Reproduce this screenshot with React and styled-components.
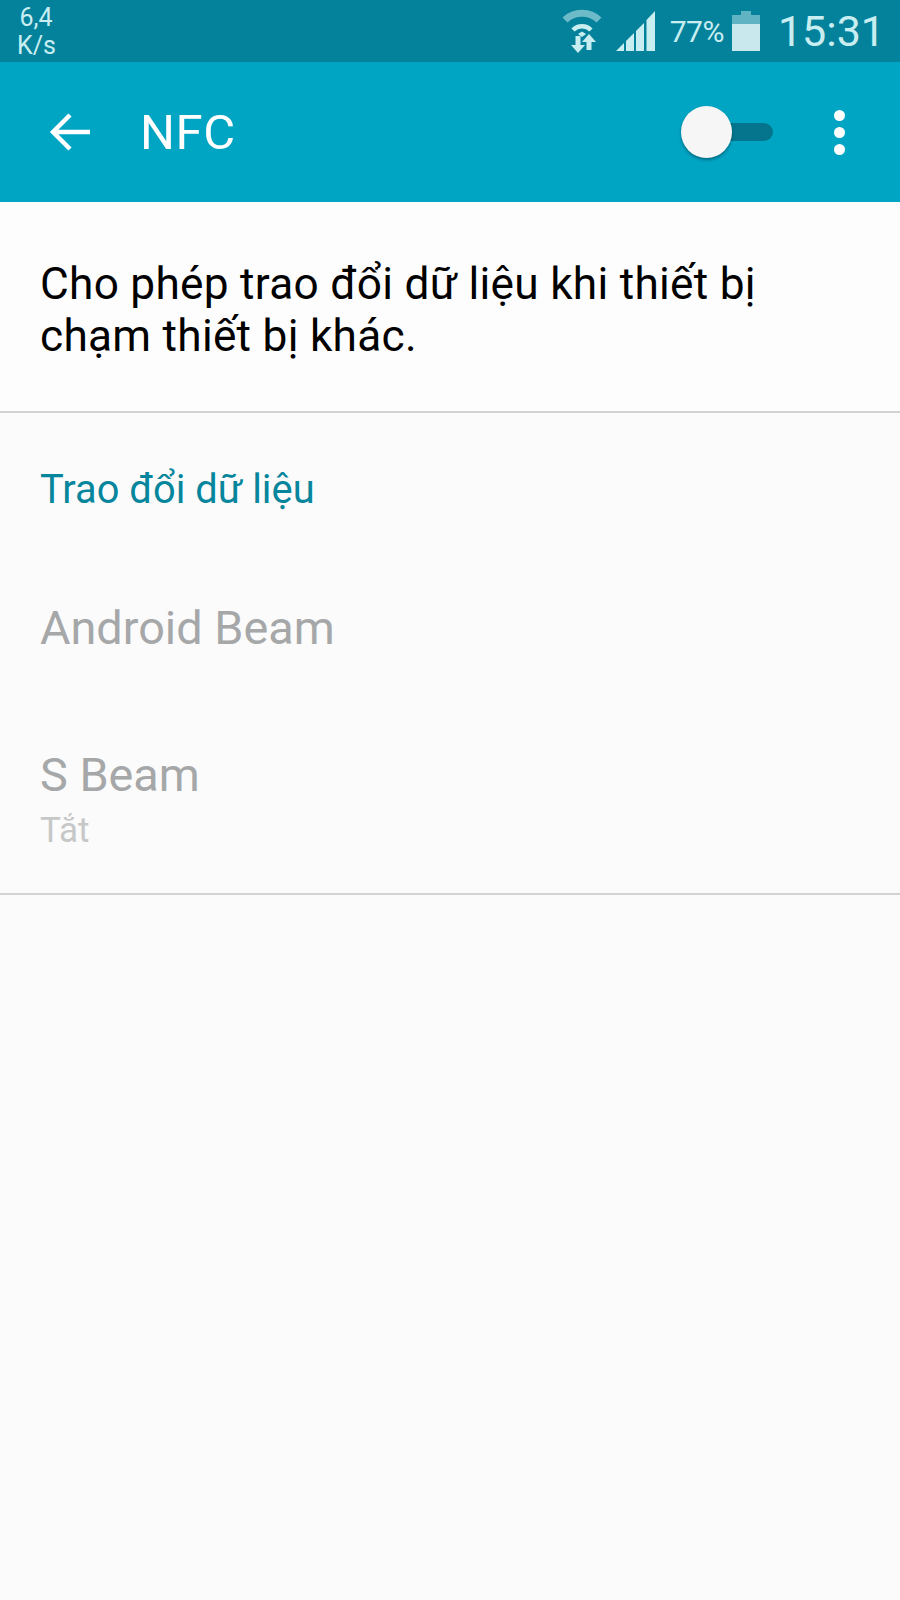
import React from 'react';
import styled, { createGlobalStyle } from 'styled-components';

const GlobalStyle = createGlobalStyle`
  html, body {
    margin: 0;
    padding: 0;
    background: #fbfbfb;
  }
  body {
    font-family: Roboto, "Liberation Sans", sans-serif;
  }
`;

const Screen = styled.div`
  width: 900px;
  height: 1600px;
  overflow: hidden;
  background: #fbfbfb;
`;

const StatusBar = styled.div`
  height: 62px;
  box-sizing: border-box;
  background: #05829b;
  color: #c9eef2;
  display: flex;
  align-items: center;
  justify-content: space-between;
  padding: 0 15px 0 17px;
`;

const Speed = styled.div`
  width: 38px;
  font-size: 25px;
  line-height: 28px;
  text-align: center;
  margin-top: 2px;
`;

const StatusRight = styled.div`
  display: flex;
  align-items: center;
`;

const SignalWrap = styled.div`
  display: flex;
  margin-left: 13px;
`;

const Percent = styled.span`
  font-size: 30px;
  letter-spacing: -0.5px;
  margin: 0 8px 0 14px;
`;

const Clock = styled.span`
  font-size: 43px;
  margin-left: 18px;
`;

const Toolbar = styled.div`
  height: 140px;
  box-sizing: border-box;
  background: #00a5c4;
  display: flex;
  align-items: center;
  padding: 0 0 0 47px;
  color: #fff;
`;

const Title = styled.div`
  font-size: 49px;
  letter-spacing: 0.6px;
  margin-left: 49px;
  flex: 1;
`;

const Switch = styled.div`
  width: 92px;
  height: 52px;
  display: flex;
  align-items: center;
`;

const Track = styled.div`
  width: 68px;
  height: 18px;
  margin-left: 24px;
  border-radius: 9px;
  background: #04758c;
  position: relative;
`;

const Thumb = styled.div`
  position: absolute;
  left: -24px;
  top: -17px;
  width: 51px;
  height: 52px;
  border-radius: 50%;
  background: #f6f6f6;
  box-shadow: 0 2px 3px rgba(0, 60, 80, 0.55);
`;

const MoreButton = styled.div`
  display: flex;
  flex-direction: column;
  gap: 6px;
  margin: 0 55px 0 61px;
`;

const Dot = styled.div`
  width: 11px;
  height: 11px;
  border-radius: 50%;
  background: #fff;
`;

const Description = styled.div`
  height: 209px;
  box-sizing: border-box;
  padding: 56px 120px 0 40px;
  font-size: 44.2px;
  letter-spacing: 0.27px;
  line-height: 52px;
  color: #000;
  background: #fdfdfd;
`;

const Section = styled.div`
  border-top: 2px solid #d2d2d2;
  border-bottom: 2px solid #d2d2d2;
  height: 484px;
  box-sizing: border-box;
  padding: 0 40px;
`;

const SectionHeader = styled.div`
  color: #06869c;
  font-size: 39.8px;
  line-height: 44px;
  padding-top: 55px;
`;

const ItemTitle = styled.div`
  color: #a5a7a8;
  font-size: 46.800px;
  line-height: 56px;
  margin-top: ${p => p.$gap}px;
`;

const ItemSub = styled.div`
  color: #c6c7c7;
  font-size: 35px;
  line-height: 40px;
  margin-top: 8px;
`;

const WifiIcon = () => (
  <svg width="42" height="46" viewBox="0 0 42 46">
    <path d="M4 12 C13 3 29 3 38 12" fill="none" stroke="#6dbac8" strokeWidth="7" />
    <path d="M12 22 C17 17 25 17 30 22" fill="none" stroke="#c9eef2" strokeWidth="4.500" />
    <path d="M17 26 L21 23.500 L25 26 L21 29 Z" fill="#c9eef2" />
    <path d="M14.500 28 H19.500 V37 H24 L17 45 L10 37 H14.500 Z" fill="#c9eef2" />
    <path d="M25.500 42 H30.500 V34 H35 L28 26 L21 34 H25.500 Z" fill="#c9eef2" />
  </svg>
);

const SignalIcon = () => (
  <svg width="40" height="40" viewBox="0 0 40 40">
    <path d="M0 40 L8 32 V40 Z" fill="#c9eef2" />
    <path d="M10 30 L18 22 V40 H10 Z" fill="#c9eef2" />
    <path d="M20 20 L28 12 V40 H20 Z" fill="#c9eef2" />
    <path d="M30.500 9 L39 0 V40 H30.500 Z" fill="#c9eef2" />
  </svg>
);

const BatteryIcon = () => (
  <svg width="28" height="40" viewBox="0 0 28 40">
    <rect x="9" y="0" width="10" height="5" fill="#5fb3c3" />
    <rect x="0" y="4" width="28" height="9" fill="#5fb3c3" />
    <rect x="0" y="13" width="28" height="27" fill="#c9e8ee" />
  </svg>
);

const BackIcon = () => (
  <svg width="44" height="40" viewBox="0 0 44 40">
    <path d="M43 20 H6 M23 3 L6 20 L23 37" fill="none" stroke="#fff" strokeWidth="4.500" />
  </svg>
);

export default function App() {
  return (
    <Screen>
      <GlobalStyle />
      <StatusBar>
        <Speed>6,4<br />K/s</Speed>
        <StatusRight>
          <WifiIcon />
          <SignalWrap>
            <SignalIcon />
          </SignalWrap>
          <Percent>77%</Percent>
          <BatteryIcon />
          <Clock>15:31</Clock>
        </StatusRight>
      </StatusBar>
      <Toolbar>
        <BackIcon />
        <Title>NFC</Title>
        <Switch>
          <Track>
            <Thumb />
          </Track>
        </Switch>
        <MoreButton>
          <Dot />
          <Dot />
          <Dot />
        </MoreButton>
      </Toolbar>
      <Description>Cho phép trao đổi dữ liệu khi thiết bị chạm thiết bị khác.</Description>
      <Section>
        <SectionHeader>Trao đổi dữ liệu</SectionHeader>
        <ItemTitle $gap={88}>Android Beam</ItemTitle>
        <ItemTitle $gap={91}>S Beam</ItemTitle>
        <ItemSub>Tắt</ItemSub>
      </Section>
    </Screen>
  );
}
